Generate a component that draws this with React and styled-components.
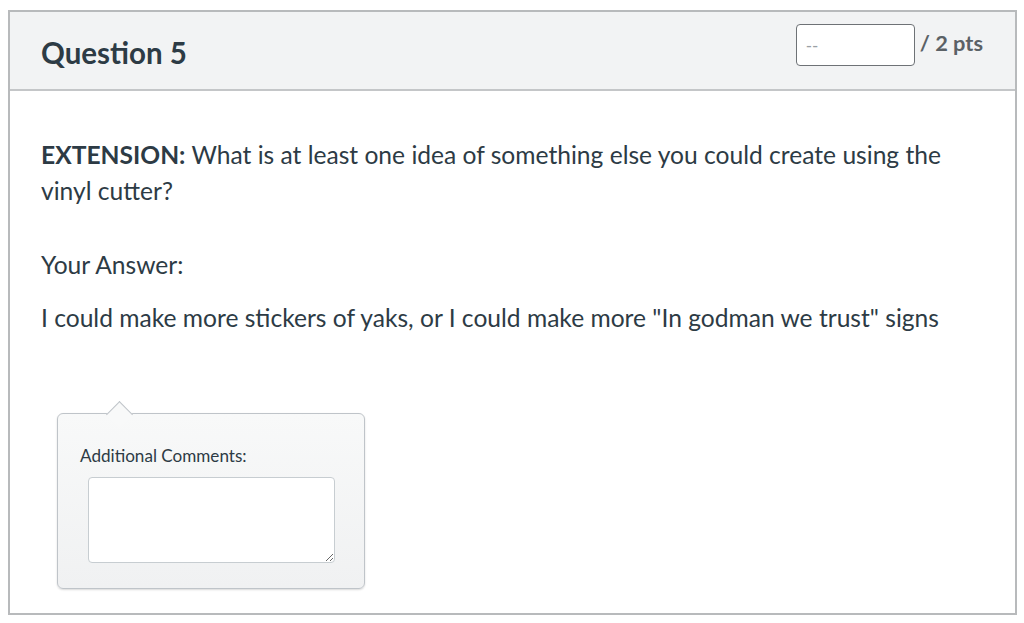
import React from 'react';
import styled, { createGlobalStyle } from 'styled-components';

const GlobalStyle = createGlobalStyle`
  body {
    margin: 0;
    background: #fff;
    font-family: Lato, "Open Sans", "Liberation Sans", sans-serif;
    color: #2d3b45;
  }
`;

const App = () => {
  return (
    <>
      <GlobalStyle />
      <QuestionCard>
        <Header>
          <Title>Question 5</Title>
          <Points>
            <PointsInput placeholder="--" />
            <PointsLabel>/ 2 pts</PointsLabel>
          </Points>
        </Header>
        <Body>
          <Prompt>
            <strong>EXTENSION:</strong> What is at least one idea of something else you could create using the vinyl cutter?
          </Prompt>
          <AnswerLabel>Your Answer:</AnswerLabel>
          <AnswerText>I could make more stickers of yaks, or I could make more "In godman we trust" signs</AnswerText>
          <CommentBox>
            <CommentLabel>Additional Comments:</CommentLabel>
            <CommentArea />
          </CommentBox>
        </Body>
      </QuestionCard>
    </>
  );
};

const QuestionCard = styled.div`
  margin: 10px 0 0 8px;
  width: 1005px;
  height: 601px;
  border: 2px solid #b8babc;
  display: flex;
  flex-direction: column;
  box-sizing: content-box;
`;

const Header = styled.div`
  height: 77px;
  background: #f2f3f4;
  border-bottom: 2px solid #c4c6c8;
  display: flex;
  justify-content: space-between;
  padding: 0 32px 0 31px;
`;

const Title = styled.h2`
  margin: 0;
  align-self: center;
  font-size: 29.5px;
  font-weight: 700;
  color: #2d3b45;
  padding-top: 4px;
`;

const Points = styled.div`
  display: flex;
  align-items: flex-start;
  gap: 5px;
  padding-top: 12px;
`;

const PointsInput = styled.input`
  width: 119px;
  height: 42px;
  box-sizing: border-box;
  border: 1px solid #6e7276;
  border-radius: 4px;
  padding: 0 9px;
  font-family: Lato, sans-serif;
  font-size: 17px;
  background: #fff;
  &::placeholder {
    color: #9aa0a5;
  }
`;

const PointsLabel = styled.span`
  font-size: 21.8px;
  font-weight: 700;
  color: #5b6166;
  line-height: 24px;
  margin-top: 7px;
`;

const Body = styled.div`
  padding: 46px 32px 0 31px;
  font-size: 24.6px;
  line-height: 36px;
`;

const Prompt = styled.p`
  margin: 0;
  strong {
    font-weight: 700;
  }
`;

const AnswerLabel = styled.p`
  margin: 38px 0 0;
`;

const AnswerText = styled.p`
  margin: 17px 0 0;
`;

const CommentBox = styled.div`
  position: relative;
  margin: 77px 0 0 16px;
  width: 308px;
  height: 176px;
  border: 1px solid #bfc4c9;
  border-radius: 6px;
  background: linear-gradient(#f8f9f9, #f0f1f2);
  box-shadow: 0 1px 2px rgba(0, 0, 0, 0.15);
  padding: 30px 0 0 22px;
  box-sizing: border-box;
  &::before {
    content: '';
    position: absolute;
    top: -9px;
    left: 52px;
    width: 19px;
    height: 19px;
    background: #f8f9f9;
    border-left: 1px solid #bfc4c9;
    border-top: 1px solid #bfc4c9;
    transform: rotate(45deg);
    box-sizing: border-box;
  }
`;

const CommentLabel = styled.div`
  font-size: 17.1px;
  line-height: 24px;
  color: #2d3b45;
`;

const CommentArea = styled.textarea`
  display: block;
  margin: 9px 0 0 8px;
  width: 247px;
  height: 86px;
  box-sizing: border-box;
  border: 1px solid #c7cdd1;
  border-radius: 4px;
  background: #fff;
  resize: both;
  font-family: Lato, sans-serif;
`;

export default App;
